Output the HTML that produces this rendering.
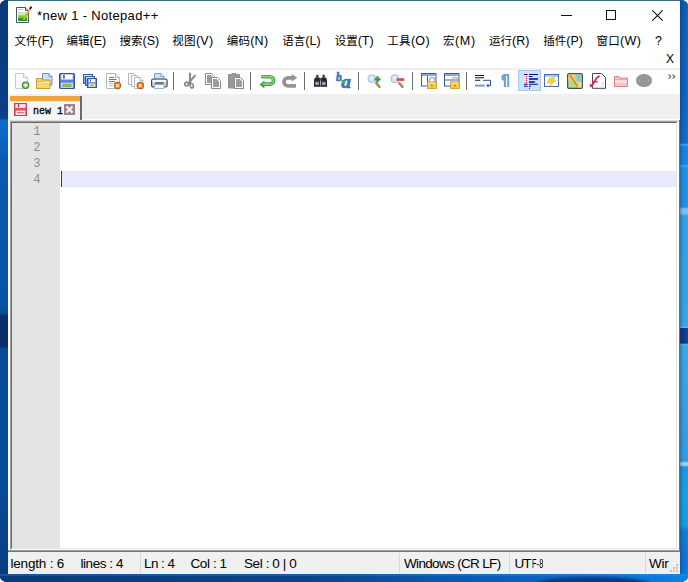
<!DOCTYPE html>
<html lang="zh">
<head>
<meta charset="utf-8">
<title>*new 1 - Notepad++</title>
<style>
html,body{margin:0;padding:0;}
body{width:688px;height:582px;overflow:hidden;position:relative;background:#0a4c98;font-family:"Liberation Sans","Noto Sans CJK SC",sans-serif;color:#000;}
.abs{position:absolute;}
#deskL{left:0;top:0;width:8px;height:582px;background:linear-gradient(to bottom,#0a3a7a 0,#0a4086 118px,#0a6ed0 121px,#0a68c6 135px,#0a5ab2 160px,#0a54a6 300px,#0a4c98 313px,#0a2f6a 316px,#0a2f6a 346px,#0a4a98 349px,#0a4c9a 480px,#093f84 560px,#083878 582px);}
#deskR{left:680px;top:0;width:8px;height:582px;background:linear-gradient(to bottom,#0b5ab4 0,#0b60c0 100px,#0c68c8 143px,#3aa0ec 144.5px,#0c80e0 147px,#0e84e2 164px,#3aa8f0 166px,#1a8ee4 168px,#1c90e4 207px,#7cc4f6 209px,#7cc4f6 213px,#2e9ee4 216px,#34a2e4 326px,#62b6f2 327.5px,#0a3a88 328.5px,#0a3a88 343px,#52a8ec 344.5px,#36a6e2 346px,#3098e0 461px,#9cd6f8 463px,#9cd6f8 465px,#1e92e2 467px,#12a0e2 500px,#1098e0 526px,#0c78d4 531px,#0a70d0 560px,#0a78d8 582px);}
#deskR2{left:680px;top:0;width:8px;height:582px;background:linear-gradient(to right,rgba(4,40,100,0.32) 0,rgba(4,40,100,0.06) 2.5px,rgba(60,150,240,0) 4px,rgba(120,200,250,0.1) 8px);}
#redge{left:679px;top:120px;width:1px;height:431px;background:#667476;}
#deskB{left:0;top:574px;width:688px;height:8px;overflow:hidden;background:linear-gradient(to right,#093c7c 0,#0a4488 300px,#0a58b0 440px,#0a62c2 540px,#0a78d8 650px,#0a82e4 688px);}
#deskB i{position:absolute;left:0;top:0;width:688px;height:2px;background:rgba(80,150,230,0.25);}
#deskB b{position:absolute;left:535px;top:3px;width:115px;height:14px;border-radius:50%;background:#0a3c84;filter:blur(1px);}
.corner{fill:#fff;}
#win{left:8px;top:0;width:672px;height:574px;background:#fff;}
#topline{left:8px;top:0;width:672px;height:1px;background:#3f6b82;}
#title{left:37px;top:8px;font-size:13px;line-height:16px;white-space:nowrap;letter-spacing:0.33px;}
.menu{top:33px;font-size:12.5px;line-height:16px;white-space:nowrap;}
.menu .c{font-size:11.5px;}
#tbline{left:9px;top:68px;width:671px;height:2px;background:#efefef;}
#tabbar{left:8px;top:94px;width:672px;height:25px;background:#f0f0f0;}
#tabline{left:9px;top:120px;width:670px;height:1px;background:#dcdcdc;}
#edframe{left:10px;top:121px;width:668px;height:429px;box-sizing:border-box;border:1px solid #a0a0a0;border-right-color:#fff;border-bottom-color:#fff;background:#fff;}
#edframe2{left:11px;top:122px;width:666px;height:427px;box-sizing:border-box;border:1px solid #696969;border-right-color:#e3e3e3;border-bottom-color:#e3e3e3;background:#fff;}
#margin{left:12px;top:123px;width:48px;height:425px;background:#e4e4e4;}
#curline{left:61px;top:171px;width:615px;height:16px;background:#e8e8ff;}
#caret{left:61px;top:171px;width:1px;height:16px;background:#4a2a90;}
.ln{left:12px;width:28.5px;text-align:right;font-size:12px;line-height:16px;color:#8c8c8c;margin-top:1.2px;font-family:"Liberation Mono",monospace;}
#status{left:8px;top:550px;width:672px;height:24px;background:#f0f0f0;border-top:1px solid #9a9a9a;box-sizing:border-box;}
#status2{left:8px;top:551px;width:672px;height:1px;background:#787878;}
.st{top:555.5px;font-size:13.5px;line-height:16px;white-space:nowrap;}
.sep{top:553px;width:1px;height:20px;background:#d7d7d7;}
svg{position:absolute;overflow:visible;}
.tsep{top:72px;width:1px;height:18px;background:#6e6e6e;}
</style>
</head>
<body>
<div id="deskL" class="abs"></div>
<div id="deskR" class="abs"></div>
<div id="deskR2" class="abs"></div>
<div id="deskB" class="abs"><i></i><b></b></div>
<svg style="left:0;top:0" width="688" height="582" viewBox="0 0 688 582">
<path class="corner" d="M0 0h4.200v0.600l-2.200 0.800l-1 1.200l-1 1.600z"/>
<path class="corner" d="M688 0h-4.200v0.600l2.200 0.800l1 1.200l1 1.600z"/>
<path class="corner" d="M0 582h4.200v-0.600l-2.200 -0.800l-1 -1.200l-1 -1.600z"/>
<path class="corner" d="M688 582h-4.200v-0.600l2.200 -0.800l1 -1.200l1 -1.600z"/>
</svg>
<div id="win" class="abs"></div>
<div id="topline" class="abs"></div>
<div id="title" class="abs">*new 1 - Notepad++</div>
<svg style="left:14px;top:3px" width="24" height="22" viewBox="0 0 24 22">
<path d="M2.500 4.500h9l3 3v12h-12z" fill="#fff" stroke="#4b5563" stroke-width="1"/>
<path d="M11.500 4.500v3h3" fill="#e5e7eb" stroke="#4b5563" stroke-width="1"/>
<rect x="4.100" y="9.600" width="9.100" height="8.400" fill="#7ac943"/>
<rect x="4.100" y="9.600" width="9.100" height="2.800" fill="#c9ebb0"/>
<rect x="4.100" y="15.200" width="9.100" height="2.800" fill="#2f8f1f"/>
<path d="M4.500 6.500h1M6.300 6.500h1M8.100 6.500h1" stroke="#9ca3af" stroke-width="1"/>
<path d="M16.400 5.300l-6.400 11" stroke="#e9a820" stroke-width="1.800" stroke-linecap="round"/>
<path d="M17 4.300l-0.600 1" stroke="#4a1030" stroke-width="2" stroke-linecap="round"/>
</svg>
<svg style="left:561px;top:15px" width="11" height="1"><rect width="11" height="1" fill="#111"/></svg>
<svg style="left:606px;top:10px" width="10" height="10"><rect x="0.500" y="0.500" width="9" height="9" fill="none" stroke="#111" stroke-width="1"/></svg>
<svg style="left:652px;top:10px" width="11" height="11"><path d="M0.300 0.300l10.400 10.400M10.700 0.300l-10.400 10.400" stroke="#111" stroke-width="1.100" fill="none"/></svg>


<div class="abs menu" style="left:14.5px"><span class="c">文件</span>(F)</div>
<div class="abs menu" style="left:66.5px"><span class="c">编辑</span>(E)</div>
<div class="abs menu" style="left:119.5px"><span class="c">搜索</span>(S)</div>
<div class="abs menu" style="left:172.3px;letter-spacing:0.3px"><span class="c">视图</span>(V)</div>
<div class="abs menu" style="left:226.7px;letter-spacing:0.25px"><span class="c">编码</span>(N)</div>
<div class="abs menu" style="left:282.3px"><span class="c">语言</span>(L)</div>
<div class="abs menu" style="left:334.7px"><span class="c">设置</span>(T)</div>
<div class="abs menu" style="left:387.3px;letter-spacing:0.3px"><span class="c">工具</span>(O)</div>
<div class="abs menu" style="left:443px;letter-spacing:0.6px"><span class="c">宏</span>(M)</div>
<div class="abs menu" style="left:489px"><span class="c">运行</span>(R)</div>
<div class="abs menu" style="left:543.3px"><span class="c">插件</span>(P)</div>
<div class="abs menu" style="left:596.5px;letter-spacing:0.3px"><span class="c">窗口</span>(W)</div>
<div class="abs menu" style="left:655px">?</div>
<div class="abs menu" style="left:666px;top:51px;font-size:12px">X</div>

<div id="tbline" class="abs"></div>
<!-- new -->
<svg style="left:14px;top:73px" width="16" height="16" viewBox="0 0 16 16">
<path d="M1.500 0.500h8l4 4v11h-12z" fill="#fdfdfd" stroke="#c9c9c9"/>
<path d="M9.500 0.500v4h4" fill="#f4f4f4" stroke="#c9c9c9"/>
<circle cx="11.600" cy="12.300" r="3.700" fill="#3f7f28"/>
<circle cx="11.600" cy="12.300" r="2.700" fill="#86c35f"/>
<path d="M11.600 10.300v4M9.600 12.300h4" stroke="#fff" stroke-width="1.400"/>
</svg>
<!-- open -->
<svg style="left:36px;top:73px" width="17" height="16" viewBox="0 0 17 16">
<path d="M6.500 0.500h6.500l3 3v8.500h-9.500z" fill="#cfe0f8" stroke="#6f8fc4"/>
<path d="M13 0.500v3h3" fill="#eaf2fd" stroke="#6f8fc4"/>
<path d="M0.500 5.500h5l1 1.500h7.500v8.500h-13.500z" fill="#f7d774" stroke="#c79a2e"/>
<path d="M1 9.500h12.500" stroke="#fbe9a6" stroke-width="1"/>
<path d="M1 8.500h5.500l1 -1.500" stroke="#d6a93c" stroke-width="0.800" fill="none"/>
</svg>
<!-- save -->
<svg style="left:59px;top:73px" width="16" height="16" viewBox="0 0 16 16">
<rect x="0.600" y="0.600" width="14.800" height="14.800" rx="1" fill="#6e96de" stroke="#33539a" stroke-width="1.200"/>
<rect x="2.300" y="1.400" width="11.400" height="5.200" fill="#fdfdff"/>
<rect x="4.300" y="2" width="1.300" height="3.600" fill="#1f3568"/>
<rect x="1.300" y="6.800" width="13.400" height="2.800" fill="#5a84d6"/>
<rect x="2.300" y="9.800" width="11.400" height="5" fill="#f8faf6"/>
<rect x="3.800" y="10.900" width="8.400" height="3" fill="#8cc05e" stroke="#6b9c46" stroke-width="0.600"/>
</svg>
<!-- save all -->
<svg style="left:83px;top:74px" width="14" height="14" viewBox="0 0 14 14">
<rect x="0.500" y="0.500" width="9" height="9" fill="#86a9e6" stroke="#3c5ca2"/>
<rect x="1.300" y="1.200" width="7.400" height="1.500" fill="#eef3fc"/>
<rect x="2.500" y="2.500" width="9" height="9" fill="#86a9e6" stroke="#3c5ca2"/>
<rect x="3.300" y="3.200" width="7.400" height="1.500" fill="#eef3fc"/>
<rect x="4.500" y="4.500" width="9" height="9" fill="#6a92da" stroke="#35559c"/>
<rect x="5.800" y="5.200" width="6.400" height="2.900" fill="#fff"/>
<rect x="7" y="5.500" width="0.900" height="1.900" fill="#223a70"/>
<rect x="5.800" y="9.700" width="6.400" height="3.300" fill="#f3f7f0"/>
<rect x="6.800" y="10.500" width="4.400" height="1.900" fill="#8fbf62"/>
</svg>
<!-- close -->
<svg style="left:106px;top:73px" width="16" height="16" viewBox="0 0 16 16">
<path d="M0.500 0.500h9l4 4v11h-13z" fill="#fdfdfd" stroke="#b2b7c1"/>
<path d="M9.500 0.500v4h4" fill="#f1f1f1" stroke="#b2b7c1"/>
<path d="M3 4.500h5M3 6.500h7.500" stroke="#6e737d" stroke-width="1"/>
<path d="M3 8.500h6" stroke="#5f7fc0" stroke-width="1"/>
<path d="M3 10.500h4M3 12.500h3.500" stroke="#b5bac4" stroke-width="1"/>
<circle cx="11.500" cy="12.500" r="3.700" fill="#c65a10"/>
<circle cx="11.500" cy="12.500" r="2.600" fill="#f09a3c"/>
<path d="M10.200 11.200l2.600 2.600M12.800 11.200l-2.600 2.600" stroke="#fbe3c4" stroke-width="1.100"/>
</svg>
<!-- close all -->
<svg style="left:128px;top:73px" width="16" height="16" viewBox="0 0 16 16">
<path d="M0.500 0.500h5.500l2.500 2.500v8.500h-8z" fill="#fdfdfd" stroke="#b2b7c1"/>
<path d="M3.500 2.500h5.500l2.500 2.500v8.500h-8z" fill="#fdfdfd" stroke="#b2b7c1"/>
<path d="M6.500 4.500h5.500l3 3v8h-8.500z" fill="#fdfdfd" stroke="#b2b7c1"/>
<path d="M12 4.500v3h3" fill="#f1f1f1" stroke="#b2b7c1"/>
<circle cx="12.300" cy="12.500" r="3.700" fill="#c65a10"/>
<circle cx="12.300" cy="12.500" r="2.600" fill="#f09a3c"/>
<path d="M11 11.200l2.600 2.600M13.600 11.200l-2.600 2.600" stroke="#fbe3c4" stroke-width="1.100"/>
</svg>
<!-- print -->
<svg style="left:151px;top:73px" width="17" height="16" viewBox="0 0 17 16">
<path d="M3.500 6.500v-6h6.500l3 3v3z" fill="#cfe0f8" stroke="#7f9fd0"/>
<path d="M10 0.500v3h3" fill="#eaf2fd" stroke="#7f9fd0"/>
<rect x="0.600" y="6" width="15.500" height="8" rx="1.800" fill="#d4d8de" stroke="#3c4652" stroke-width="1.200"/>
<rect x="1.500" y="7" width="13.700" height="2" fill="#f4f5f7"/>
<rect x="4" y="9" width="8.700" height="2.200" fill="#6c7480"/>
<rect x="3.500" y="11.500" width="9.500" height="4" fill="#f2f7ff" stroke="#8aa2c8" stroke-width="0.800"/>
</svg>
<div class="abs tsep" style="left:173px"></div>
<!-- cut -->
<svg style="left:182px;top:73px" width="16" height="16" viewBox="0 0 16 16">
<path d="M8 0.500v9.500M13 2.600l-6.600 7.600" stroke="#8a8a8a" stroke-width="2.100" fill="none" stroke-linecap="round"/>
<ellipse cx="4.700" cy="11" rx="2" ry="1.800" fill="none" stroke="#8a8a8a" stroke-width="1.700" transform="rotate(-25 4.700 11)"/>
<ellipse cx="9.700" cy="12.700" rx="1.500" ry="2.400" fill="none" stroke="#8a8a8a" stroke-width="1.700" transform="rotate(-15 9.700 12.700)"/>
</svg>
<!-- copy -->
<svg style="left:205px;top:73px" width="16" height="16" viewBox="0 0 16 16">
<path d="M0.500 0.500h6l3 3v8h-9z" fill="#fff" stroke="#8a8a8a"/>
<path d="M2 2h3.800l2.200 2.200v5.800h-6z" fill="#9c9c9c"/>
<path d="M6.500 4.500h6l3 3v8h-9z" fill="#fff" stroke="#8a8a8a"/>
<path d="M8 6h3.800l2.200 2.200v5.800h-6z" fill="#9c9c9c"/>
</svg>
<!-- paste -->
<svg style="left:228px;top:73px" width="16" height="16" viewBox="0 0 16 16">
<path d="M0.500 1.500h3.500v-1h4v1h3.500v13.500h-11z" fill="#9a9a9a" stroke="#909090"/>
<path d="M6.500 4.500h6l3 3v8h-9z" fill="#fff" stroke="#8a8a8a"/>
<path d="M8 6h3.800l2.200 2.200v5.800h-6z" fill="#9c9c9c"/>
</svg>
<div class="abs tsep" style="left:250px"></div>
<!-- undo -->
<svg style="left:259px;top:74px" width="16" height="15" viewBox="0 0 16 15">
<path d="M2.300 2.700h8.600a3.700 3.700 0 0 1 0 7.400h-5.900" fill="none" stroke="#3f983f" stroke-width="3.600"/>
<path d="M0.600 10.400l4.800 -3.800v7.800z" fill="#3f983f"/>
<path d="M3 2.700h7.800a3.700 3.700 0 0 1 0 7.400h-7" fill="none" stroke="#8ad486" stroke-width="1.700"/>
</svg>
<!-- redo -->
<svg style="left:282px;top:73px" width="16" height="16" viewBox="0 0 16 16">
<path d="M14 12.900h-8a4 4 0 0 1 0 -8h4" fill="none" stroke="#949494" stroke-width="3.800"/>
<path d="M15.300 4.700l-5.600 -3.700v7.400z" fill="#949494"/>
</svg>
<div class="abs tsep" style="left:304px"></div>
<!-- find -->
<svg style="left:314px;top:74px" width="13" height="13" viewBox="0 0 13 13">
<path d="M2.200 0.700h2.300v3h-2.300zM8.500 0.700h2.300v3h-2.300z" fill="#3a3f4c"/>
<path d="M1.200 3.500h4.300l0.700 1.500v7.500h-6.200v-7z" fill="#242833"/>
<path d="M7.500 3.500h4.300l1.200 2v7h-6.200v-7.500z" fill="#242833"/>
<rect x="5.500" y="4" width="2" height="2.500" fill="#4a5060"/>
<rect x="1.300" y="7.800" width="3.600" height="3.600" fill="#9aa0ac"/>
<rect x="8" y="7.800" width="3.600" height="3.600" fill="#9aa0ac"/>
<rect x="0" y="11.500" width="13" height="1" fill="#14161c"/>
</svg>
<!-- replace -->
<svg style="left:336px;top:73px" width="16" height="16" viewBox="0 0 16 16">
<text x="0" y="7.800" font-family="Liberation Serif,serif" font-size="11.500" font-weight="bold" font-style="italic" fill="#336fbe" stroke="#336fbe" stroke-width="0.500">b</text>
<text x="5.300" y="15.400" font-family="Liberation Serif,serif" font-size="19.500" font-weight="bold" font-style="italic" fill="#3a78c8" stroke="#2f62a8" stroke-width="0.500">a</text>
<path d="M5 6.800l3 2.600" stroke="#4fae4f" stroke-width="1.800"/>
<path d="M5.800 10.400h3.500v-3.500z" fill="#4fae4f"/>
</svg>
<div class="abs tsep" style="left:358px"></div>
<!-- zoom in -->
<svg style="left:367px;top:73px" width="16" height="16" viewBox="0 0 16 16">
<path d="M9.200 10.200l3.300 3.600" stroke="#a88a54" stroke-width="2.500" stroke-linecap="round"/>
<circle cx="4.900" cy="5.700" r="4" fill="#cfdcf7" stroke="#a9bde6" stroke-width="1"/>
<circle cx="4.600" cy="5.300" r="2.200" fill="#e4ecfb"/>
<path d="M10.500 3.300v6.200M7.400 6.400h6.200" stroke="#3f9a3f" stroke-width="2.400"/>
</svg>
<!-- zoom out -->
<svg style="left:390px;top:73px" width="16" height="16" viewBox="0 0 16 16">
<path d="M9.200 10.200l3.300 3.600" stroke="#a88a54" stroke-width="2.500" stroke-linecap="round"/>
<circle cx="4.900" cy="5.700" r="4" fill="#cfdcf7" stroke="#a9bde6" stroke-width="1"/>
<circle cx="4.600" cy="5.300" r="2.200" fill="#e4ecfb"/>
<rect x="6.600" y="5.200" width="7.600" height="2.700" fill="#e04858"/>
</svg>
<div class="abs tsep" style="left:412px"></div>
<!-- sync v -->
<svg style="left:421px;top:73px" width="16" height="16" viewBox="0 0 16 16">
<rect x="0.500" y="0.500" width="14.500" height="12.500" fill="#fff" stroke="#3d5c9c"/>
<rect x="1" y="1" width="13.500" height="2" fill="#86a8e0"/>
<path d="M6.500 3v10" stroke="#3d5c9c"/>
<path d="M8.500 9.500v-2.500a2.500 2.500 0 0 1 5 0v2.500" fill="none" stroke="#b8b8b8" stroke-width="1.500"/>
<rect x="6.500" y="9" width="9" height="6.500" fill="#f3c948" stroke="#c99a22" stroke-width="0.800"/>
<rect x="7.200" y="9.600" width="7.600" height="1.600" fill="#fae28c"/>
<rect x="10.300" y="11.600" width="1.400" height="2" fill="#b08420"/>
</svg>
<!-- sync h -->
<svg style="left:444px;top:73px" width="16" height="16" viewBox="0 0 16 16">
<rect x="0.500" y="0.500" width="14.500" height="12.500" fill="#fff" stroke="#3d5c9c"/>
<rect x="1" y="1" width="13.500" height="2" fill="#86a8e0"/>
<path d="M1 7h14" stroke="#3d5c9c"/>
<path d="M8.500 9.500v-2.500a2.500 2.500 0 0 1 5 0v2.500" fill="none" stroke="#b8b8b8" stroke-width="1.500"/>
<rect x="6.500" y="9" width="9" height="6.500" fill="#f3c948" stroke="#c99a22" stroke-width="0.800"/>
<rect x="7.200" y="9.600" width="7.600" height="1.600" fill="#fae28c"/>
<rect x="10.300" y="11.600" width="1.400" height="2" fill="#b08420"/>
</svg>
<div class="abs tsep" style="left:466px"></div>
<!-- wrap -->
<svg style="left:475px;top:74px" width="17" height="14" viewBox="0 0 17 14">
<path d="M0 1.500h9M0 3.700h9M0 6.300h5.300" stroke="#151515" stroke-width="1.100"/>
<rect x="0" y="10.500" width="9.800" height="2.200" fill="#7da2dc"/>
<path d="M8 6.300h7.500v5.300h-3" fill="none" stroke="#2f4f96" stroke-width="1"/>
<path d="M11.300 11.600l2.200 -2v4z" fill="#2f4f96"/>
</svg>
<!-- pilcrow -->
<svg style="left:500px;top:74px" width="10" height="13" viewBox="0 0 10 13">
<path d="M3.900 13v-6.200a3.500 3.500 0 0 1 0 -6.800h5.300v13h-2v-11.300h-1.200v11.300z" fill="#6f9fdc"/>
</svg>
<!-- indent guide (pressed) -->
<div class="abs" style="left:518px;top:70px;width:23px;height:21px;background:#cde4f8;border:1px solid #a6cbee;box-sizing:border-box;"></div>
<svg style="left:524px;top:74px" width="15" height="15" viewBox="0 0 15 15">
<path d="M0 0.500h3.600M5 0.500h9M5 2.500h3.500M0 10.300h3.600M5 10.300h9M0 12.300h3.600M5 12.300h2" stroke="#0e0e86" stroke-width="1.100"/>
<path d="M5 5h9" stroke="#1428d0" stroke-width="1.800"/>
<path d="M5 8h5.800" stroke="#1428d0" stroke-width="1.800"/>
<rect x="5" y="13.800" width="1" height="1" fill="#0e0e86"/>
<path d="M2.500 2v7" stroke="#d82848" stroke-width="1" stroke-dasharray="1 1"/>
</svg>
<!-- udl -->
<svg style="left:544px;top:74px" width="15" height="13" viewBox="0 0 15 13">
<rect x="0.500" y="0.500" width="14" height="12" fill="#fff" stroke="#4a6aa8"/>
<rect x="1" y="1" width="13" height="1.800" fill="#a9c4ee"/>
<path d="M5.500 4l6 -0.500l-2.500 3l3 0l-6.500 5.500l1.500 -3.500l-4 0.500z" fill="#f4cf4a" stroke="#e8b830" stroke-width="0.500"/>
</svg>
<!-- doc map -->
<svg style="left:567px;top:73px" width="16" height="16" viewBox="0 0 16 16">
<rect x="0.600" y="0.600" width="14.800" height="14.800" rx="1.500" fill="#b5dc82" stroke="#4c4c4c" stroke-width="1.200"/>
<path d="M1.500 1.500h7l-2 6h-5z" fill="#f3cf7c"/>
<path d="M9 1.500h5.500v7h-4z" fill="#86c4f0"/>
<path d="M10 9h4.500v5.500h-3z" fill="#f2d890"/>
<path d="M3 2.300c2.500 3.500 5 6.500 7.300 11.200" stroke="#e07a28" stroke-width="1.500" fill="none"/>
<path d="M13.500 5.500c-1 3 -2 5 -3 8" stroke="#e6c468" stroke-width="0.900" fill="none"/>
</svg>
<!-- function list -->
<svg style="left:589px;top:73px" width="17" height="16" viewBox="0 0 17 16">
<path d="M3.500 0.500h9l4 4v10.800h-13z" fill="#fff" stroke="#474747"/>
<path d="M14 9.500c0 2 -0.500 3 -2 3.300" fill="none" stroke="#9a9a9a" stroke-width="0.800" stroke-dasharray="1.500 1"/>
<path d="M1.800 13.200c3.500 -1 4 -8.800 8.200 -9.800" fill="none" stroke="#d03454" stroke-width="1.900" stroke-linecap="round"/>
<path d="M3.300 8.700h5.400" stroke="#d03454" stroke-width="1.600"/>
<path d="M0.800 11.400l2.500 2.600" stroke="#d03454" stroke-width="1.600"/>
</svg>
<!-- folder as workspace -->
<svg style="left:614px;top:76px" width="14" height="11" viewBox="0 0 14 11">
<path d="M0.500 0.500h4.500l1 1.500h7.500v8.500h-13z" fill="#f6c4c4" stroke="#da8488"/>
<path d="M1 3.500h12" stroke="#e9a0a2" stroke-width="0.800"/>
<rect x="1" y="4" width="12" height="3" fill="#fadcdc"/>
</svg>
<!-- monitor -->
<svg style="left:636px;top:74px" width="16" height="13" viewBox="0 0 16 13">
<path d="M8 0c4 0 8 2.500 8 6.500s-3.500 6.500 -8 6.500s-8 -2.500 -8 -6.500s4 -6.500 8 -6.500z" fill="#979797"/>
<circle cx="3.200" cy="6.200" r="0.700" fill="#b8b8b8"/><circle cx="12.800" cy="6.200" r="0.700" fill="#b8b8b8"/>
</svg>
<!-- chevron -->
<svg style="left:668px;top:74px" width="8" height="5" viewBox="0 0 8 5">
<path d="M0.500 0.300l2.300 2.200l-2.300 2.200M4.500 0.300l2.300 2.200l-2.300 2.200" fill="none" stroke="#5b6385" stroke-width="1.100"/>
</svg>

<div id="tabbar" class="abs"></div>
<div id="tabline" class="abs"></div>
<div class="abs" style="left:10px;top:96px;width:72px;height:24px;background:#f6f6f6;border-right:2px solid #6c6c6c;box-sizing:border-box;"></div>
<div class="abs" style="left:10px;top:96px;width:70px;height:4.500px;background:#f0a336;"></div>
<div class="abs" style="left:10px;top:100.500px;width:70px;height:1px;background:#fbe8c0;"></div>
<svg style="left:14px;top:103px" width="13" height="13" viewBox="0 0 13 13">
<rect x="0.500" y="0.500" width="12" height="12" fill="#ee7680" stroke="#cc4252"/>
<rect x="1.600" y="1.200" width="9.800" height="3.600" fill="#fdeaea"/>
<rect x="4" y="1.200" width="1.100" height="3" fill="#b02838"/>
<rect x="1.200" y="5" width="10.600" height="2.300" fill="#e0505e"/>
<rect x="2" y="7.700" width="9" height="4.300" fill="#fcdcdc"/>
<rect x="3.200" y="9" width="6.600" height="1.200" fill="#e86872"/>
</svg>
<div class="abs" style="left:33px;top:104.5px;font-family:'Liberation Mono',monospace;font-weight:normal;font-size:10px;line-height:14px;white-space:pre;letter-spacing:0px;color:#000;-webkit-text-stroke:0.3px #000;">new 1</div>
<svg style="left:64px;top:104px" width="11" height="11" viewBox="0 0 11 11">
<rect width="11" height="11" fill="#a5808f"/>
<path d="M2.500 2.500l6 6M8.500 2.500l-6 6" stroke="#fff" stroke-width="1.900"/>
</svg>

<div id="edframe" class="abs"></div>
<div id="edframe2" class="abs"></div>
<div id="margin" class="abs"></div>
<div id="curline" class="abs"></div>
<div id="caret" class="abs"></div>
<div class="abs ln" style="top:123px">1</div>
<div class="abs ln" style="top:139px">2</div>
<div class="abs ln" style="top:155px">3</div>
<div class="abs ln" style="top:171px">4</div>

<div id="redge" class="abs"></div>
<div id="status" class="abs"></div>
<div id="status2" class="abs"></div>
<div class="abs st" style="left:10.5px;letter-spacing:-0.2px">length : 6</div>
<div class="abs st" style="left:80.5px;letter-spacing:-0.45px">lines : 4</div>
<div class="abs st" style="left:144px;letter-spacing:-0.55px">Ln : 4</div>
<div class="abs st" style="left:190.5px;letter-spacing:-0.4px">Col : 1</div>
<div class="abs st" style="left:244px;letter-spacing:-0.4px">Sel : 0 | 0</div>
<div class="abs st" style="left:404px;letter-spacing:-0.67px">Windows (CR LF)</div>
<div class="abs st" style="left:514.5px"><span style="letter-spacing:-0.9px">UT</span><span style="display:inline-block;transform:scaleX(0.56);transform-origin:0 50%;margin-left:1px">F-8</span></div>
<div class="abs st" style="left:649px;letter-spacing:-0.2px">Wir</div>
<svg style="left:669px;top:563px" width="10" height="10" viewBox="0 0 10 10"><g fill="#c2c2c2"><rect x="7" y="1" width="2" height="2"/><rect x="4" y="4" width="2" height="2"/><rect x="7" y="4" width="2" height="2"/><rect x="1" y="7" width="2" height="2"/><rect x="4" y="7" width="2" height="2"/><rect x="7" y="7" width="2" height="2"/></g></svg>
<div class="abs sep" style="left:140px"></div>
<div class="abs sep" style="left:399px"></div>
<div class="abs sep" style="left:509px"></div>
<div class="abs sep" style="left:645px"></div>
</body>
</html>
